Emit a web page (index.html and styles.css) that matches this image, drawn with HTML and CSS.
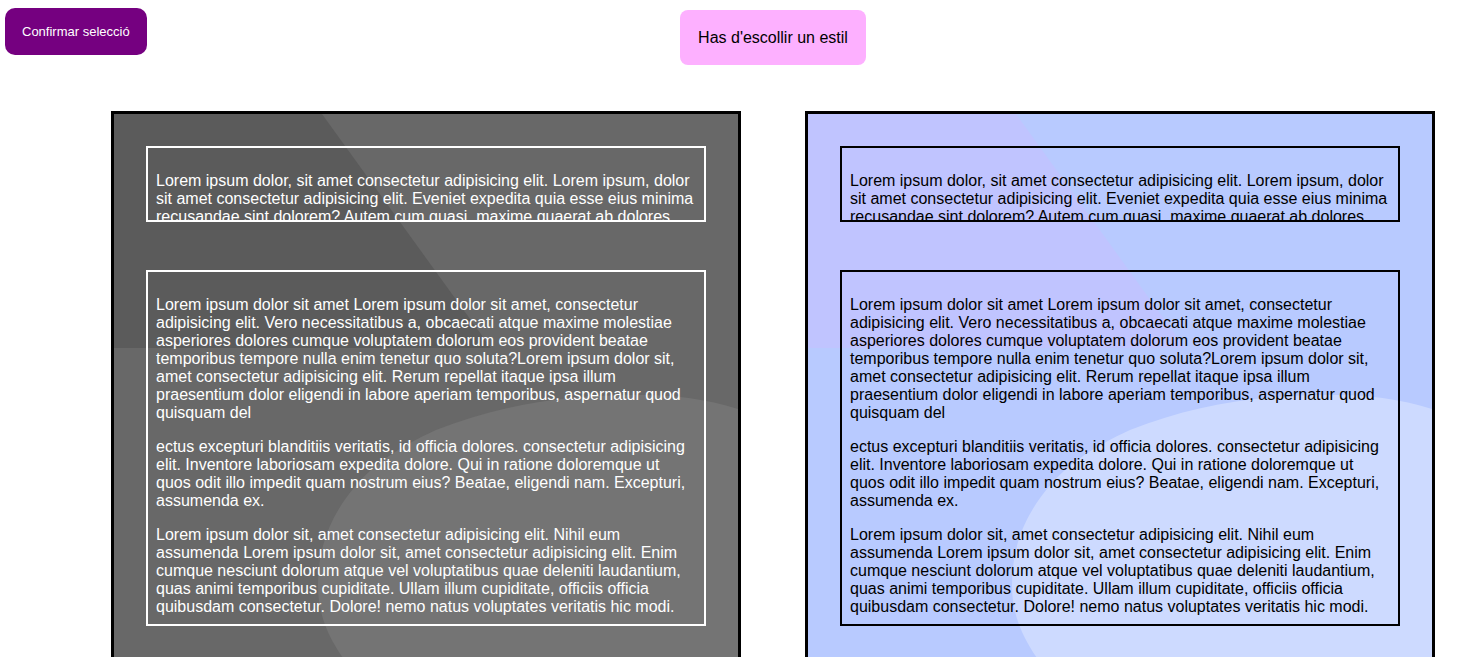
FILE: index.html
```
<!DOCTYPE html>
<html lang="ca">
<head>
<meta charset="utf-8">
<title>Has d'escollir un estil</title>
<link rel="stylesheet" href="styles.css">
</head>
<body>
<header class="bar">
  <button class="confirm" type="button">Confirmar selecció</button>
  <p class="notice" role="status">Has d'escollir un estil</p>
</header>
<main class="styles">
  <article class="card card-dark">
    <svg class="shapes" viewBox="0 0 624 544" preserveAspectRatio="none" aria-hidden="true">
      <path class="corner" d="M0 0H208L377 234H0Z"/>
      <path class="blob" d="M624 295C592 285 560 281 530 281C460 280 390 289 322 316C285 333 262 349 244 369C215 402 204 435 204 471C204 500 214 522 229 544H624Z"/>
    </svg>
    <section class="box box-short">
      <p>Lorem ipsum dolor, sit amet consectetur adipisicing elit. Lorem ipsum, dolor sit amet consectetur adipisicing elit. Eveniet expedita quia esse eius minima recusandae sint dolorem? Autem cum quasi, maxime quaerat ab dolores</p>
    </section>
    <section class="box box-tall">
      <p>Lorem ipsum dolor sit amet Lorem ipsum dolor sit amet, consectetur adipisicing elit. Vero necessitatibus a, obcaecati atque maxime molestiae asperiores dolores cumque voluptatem dolorum eos provident beatae temporibus tempore nulla enim tenetur quo soluta?Lorem ipsum dolor sit, amet consectetur adipisicing elit. Rerum repellat itaque ipsa illum praesentium dolor eligendi in labore aperiam temporibus, aspernatur quod quisquam del</p>
      <p>ectus excepturi blanditiis veritatis, id officia dolores. consectetur adipisicing elit. Inventore laboriosam expedita dolore. Qui in ratione doloremque ut quos odit illo impedit quam nostrum eius? Beatae, eligendi nam. Excepturi, assumenda ex.</p>
      <p>Lorem ipsum dolor sit, amet consectetur adipisicing elit. Nihil eum assumenda Lorem ipsum dolor sit, amet consectetur adipisicing elit. Enim cumque nesciunt dolorum atque vel voluptatibus quae deleniti laudantium, quas animi temporibus cupiditate. Ullam illum cupiditate, officiis officia quibusdam consectetur. Dolore! nemo natus voluptates veritatis hic modi.</p>
    </section>
  </article>
  <article class="card card-light">
    <svg class="shapes" viewBox="0 0 624 544" preserveAspectRatio="none" aria-hidden="true">
      <path class="corner" d="M0 0H208L377 234H0Z"/>
      <path class="blob" d="M624 295C592 285 560 281 530 281C460 280 390 289 322 316C285 333 262 349 244 369C215 402 204 435 204 471C204 500 214 522 229 544H624Z"/>
    </svg>
    <section class="box box-short">
      <p>Lorem ipsum dolor, sit amet consectetur adipisicing elit. Lorem ipsum, dolor sit amet consectetur adipisicing elit. Eveniet expedita quia esse eius minima recusandae sint dolorem? Autem cum quasi, maxime quaerat ab dolores</p>
    </section>
    <section class="box box-tall">
      <p>Lorem ipsum dolor sit amet Lorem ipsum dolor sit amet, consectetur adipisicing elit. Vero necessitatibus a, obcaecati atque maxime molestiae asperiores dolores cumque voluptatem dolorum eos provident beatae temporibus tempore nulla enim tenetur quo soluta?Lorem ipsum dolor sit, amet consectetur adipisicing elit. Rerum repellat itaque ipsa illum praesentium dolor eligendi in labore aperiam temporibus, aspernatur quod quisquam del</p>
      <p>ectus excepturi blanditiis veritatis, id officia dolores. consectetur adipisicing elit. Inventore laboriosam expedita dolore. Qui in ratione doloremque ut quos odit illo impedit quam nostrum eius? Beatae, eligendi nam. Excepturi, assumenda ex.</p>
      <p>Lorem ipsum dolor sit, amet consectetur adipisicing elit. Nihil eum assumenda Lorem ipsum dolor sit, amet consectetur adipisicing elit. Enim cumque nesciunt dolorum atque vel voluptatibus quae deleniti laudantium, quas animi temporibus cupiditate. Ullam illum cupiditate, officiis officia quibusdam consectetur. Dolore! nemo natus voluptates veritatis hic modi.</p>
    </section>
  </article>
</main>
</body>
</html>
```
FILE: styles.css
```
* { box-sizing: border-box; }

body {
  margin: 0;
  background: #fff;
  color: #000;
  font: 16px/18px "Liberation Sans", Arial, sans-serif;
}

.bar {
  display: grid;
  grid-template-columns: 106px 1fr;
  align-items: start;
  padding: 8px 40px 46px 5px;
}

.confirm {
  justify-self: start;
  padding: 16px 17px;
  border: 0;
  border-radius: 10px;
  background: #750080;
  color: #fff;
  font: 13px/15px "Liberation Sans", Arial, sans-serif;
  white-space: nowrap;
}

.notice {
  justify-self: center;
  margin: 2px 0 0;
  padding: 18px;
  border-radius: 8px;
  background: #fdb0ff;
  line-height: 19px;
}

.styles {
  display: grid;
  grid-template-columns: 1fr 1fr;
  gap: 64px;
  padding: 0 40px 0 111px;
}

.card {
  position: relative;
  display: flex;
  flex-direction: column;
  gap: 48px;
  padding: 32px;
  border: 3px solid #000;
}

.card-dark { background: #686868; color: #fff; }
.card-dark .corner { fill: #5b5b5b; }
.card-dark .blob { fill: #747474; }

.card-light { background: #b8caff; }
.card-light .corner { fill: #c0c4ff; }
.card-light .blob { fill: #cddaff; }

.shapes {
  position: absolute;
  inset: 0;
  width: 100%;
  height: 100%;
}

.box {
  position: relative;
  overflow: hidden;
  padding: 8px 8px 0;
  border: 2px solid currentColor;
}

.box-short { height: 76px; }
.box-tall { height: 356px; }
.box p { margin: 16px 0; }
```
